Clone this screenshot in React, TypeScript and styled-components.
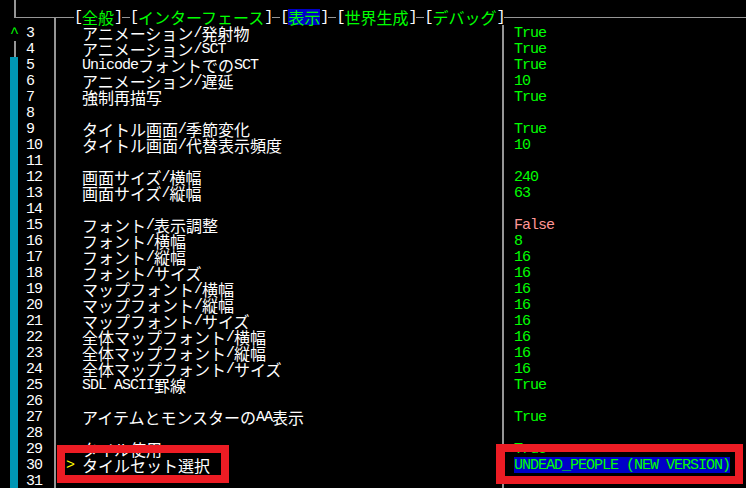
import React from 'react';
import styled, { createGlobalStyle } from 'styled-components';

const GRAY = '#969696';
const GREEN = '#00ff00';
const PINK = '#ff9696';
const TEAL = '#0096b4';
const BLUE = '#0000c8';
const YELLOW = '#ffff00';
const RED = '#ed1c24';

const rule = (x: string, y: string, w: string, h: string) =>
  `linear-gradient(${GRAY}, ${GRAY}) ${x} ${y} / ${w} ${h} no-repeat`;

const Global = createGlobalStyle`
  html, body { margin: 0; padding: 0; background: #000; }
  body { width: 746px; height: 488px; overflow: hidden; }
`;

const Screen = styled.div`
  position: relative;
  width: 746px;
  height: 488px;
  overflow: hidden;
  background: #000;
  color: #fff;
  display: flex;
  flex-direction: column;
`;

const Row = styled.div`
  display: flex;
  flex: none;
  height: 16px;
  padding-left: 10px;
`;

const TopStub = styled(Row)`
  height: 9px;
`;

const VLine = styled.div`
  flex: none;
  width: 8px;
  height: 100%;
  background: ${rule('4px', '0', '2px', '100%')};
`;

const Corner = styled.div`
  flex: none;
  width: 8px;
  height: 100%;
  background: ${rule('4px', '0', '2px', '9px')}, ${rule('4px', '8px', '4px', '1px')};
`;

const HeaderRule = styled.div`
  flex: none;
  width: 56px;
  height: 100%;
  background: ${rule('0', '8px', '100%', '1px')}, ${rule('36px', '8px', '2px', '8px')};
`;

const Dash = styled.div`
  flex: none;
  width: 8px;
  height: 100%;
  background: ${rule('0', '8px', '100%', '1px')};
`;

const Tail = styled.div`
  flex: 1;
  height: 100%;
  background: ${rule('0', '8px', '100%', '1px')};
`;

const Bracket = styled.div`
  flex: none;
  display: flex;
  color: #fff;
`;

const TabName = styled.div<{ $active?: boolean }>`
  flex: none;
  display: flex;
  color: ${GREEN};
  background: ${(p) => (p.$active ? BLUE : 'transparent')};
`;

const Run = styled.span<{ $wide: boolean }>`
  display: block;
  flex: none;
  box-sizing: border-box;
  height: 16px;
  padding-top: ${(p) => (p.$wide ? '0' : '1px')};
  white-space: pre;
  font-family: ${(p) =>
    p.$wide ? '"Noto Sans CJK JP", "Noto Sans CJK SC", sans-serif' : '"Liberation Mono", monospace'};
  font-size: ${(p) => (p.$wide ? '16px' : '15px')};
  line-height: ${(p) => (p.$wide ? '16px' : '15px')};
  letter-spacing: ${(p) => (p.$wide ? '0' : '-1px')};
`;

type ScrollState = 'up' | 'track' | 'thumb';

const ScrollCell = styled.div<{ $state: ScrollState }>`
  flex: none;
  width: 8px;
  height: 100%;
  display: flex;
  color: ${GREEN};
  background: ${(p) =>
    p.$state === 'thumb' ? TEAL : p.$state === 'track' ? rule('4px', '0', '2px', '100%') : 'transparent'};
`;

const NumCell = styled.div`
  flex: none;
  width: 24px;
  margin-left: 8px;
  display: flex;
  color: #fff;
`;

const CursorCell = styled.div`
  flex: none;
  width: 8px;
  margin-left: 8px;
  display: flex;
  color: ${YELLOW};
`;

const LabelCell = styled.div`
  flex: none;
  width: 416px;
  margin-left: 8px;
  display: flex;
  color: #fff;
`;

const ValueCell = styled.div`
  flex: 1;
  margin-left: 8px;
  display: flex;
`;

const ValueText = styled.div<{ $tone: 'green' | 'pink'; $selected?: boolean }>`
  display: flex;
  color: ${(p) => (p.$tone === 'pink' ? PINK : GREEN)};
  background: ${(p) => (p.$selected ? BLUE : 'transparent')};
`;

const Callout = styled.div`
  position: absolute;
  box-sizing: border-box;
  border: 8px solid ${RED};
  pointer-events: none;
`;

const CalloutLabel = styled(Callout)`
  left: 57px;
  top: 445px;
  width: 172px;
  height: 38px;
`;

const CalloutValue = styled(Callout)`
  left: 496px;
  top: 444px;
  width: 247px;
  height: 40px;
  border-left-width: 9px;
`;

const isWide = (ch: string) => {
  const c = ch.codePointAt(0) || 0;
  return c >= 0x2e80;
};

function Txt({ text }: { text: string }) {
  const runs: { wide: boolean; s: string }[] = [];
  for (const ch of Array.from(text)) {
    const w = isWide(ch);
    const last = runs[runs.length - 1];
    if (last && last.wide === w) last.s += ch;
    else runs.push({ wide: w, s: ch });
  }
  return (
    <>
      {runs.map((r, i) => (
        <Run key={i} $wide={r.wide}>
          {r.s}
        </Run>
      ))}
    </>
  );
}

type Item = {
  n: number;
  label?: string;
  value?: string;
  tone?: 'green' | 'pink';
  selected?: boolean;
};

const items: Item[] = [
  { n: 3, label: 'アニメーション/発射物', value: 'True' },
  { n: 4, label: 'アニメーション/SCT', value: 'True' },
  { n: 5, label: 'UnicodeフォントでのSCT', value: 'True' },
  { n: 6, label: 'アニメーション/遅延', value: '10' },
  { n: 7, label: '強制再描写', value: 'True' },
  { n: 8 },
  { n: 9, label: 'タイトル画面/季節変化', value: 'True' },
  { n: 10, label: 'タイトル画面/代替表示頻度', value: '10' },
  { n: 11 },
  { n: 12, label: '画面サイズ/横幅', value: '240' },
  { n: 13, label: '画面サイズ/縦幅', value: '63' },
  { n: 14 },
  { n: 15, label: 'フォント/表示調整', value: 'False', tone: 'pink' },
  { n: 16, label: 'フォント/横幅', value: '8' },
  { n: 17, label: 'フォント/縦幅', value: '16' },
  { n: 18, label: 'フォント/サイズ', value: '16' },
  { n: 19, label: 'マップフォント/横幅', value: '16' },
  { n: 20, label: 'マップフォント/縦幅', value: '16' },
  { n: 21, label: 'マップフォント/サイズ', value: '16' },
  { n: 22, label: '全体マップフォント/横幅', value: '16' },
  { n: 23, label: '全体マップフォント/縦幅', value: '16' },
  { n: 24, label: '全体マップフォント/サイズ', value: '16' },
  { n: 25, label: 'SDL ASCII罫線', value: 'True' },
  { n: 26 },
  { n: 27, label: 'アイテムとモンスターのAA表示', value: 'True' },
  { n: 28 },
  { n: 29, label: 'タイル使用', value: 'True' },
  { n: 30, label: 'タイルセット選択', value: 'UNDEAD_PEOPLE (NEW VERSION)', selected: true },
  { n: 31 },
];

const tabs = [
  { name: '全般' },
  { name: 'インターフェース' },
  { name: '表示', active: true },
  { name: '世界生成' },
  { name: 'デバッグ' },
];

export default function App() {
  return (
    <Screen>
      <Global />
      <TopStub>
        <VLine />
      </TopStub>
      <Row>
        <Corner />
        <HeaderRule />
        {tabs.map((t, i) => (
          <React.Fragment key={t.name}>
            {i > 0 && <Dash />}
            <Bracket>
              <Txt text="[" />
            </Bracket>
            <TabName $active={t.active}>
              <Txt text={t.name} />
            </TabName>
            <Bracket>
              <Txt text="]" />
            </Bracket>
          </React.Fragment>
        ))}
        <Tail />
      </Row>
      {items.map((it) => {
        const state: ScrollState = it.n === 3 ? 'up' : it.n === 4 ? 'track' : 'thumb';
        return (
          <Row key={it.n}>
            <ScrollCell $state={state}>{state === 'up' && <Txt text="^" />}</ScrollCell>
            <NumCell>
              <Txt text={String(it.n)} />
            </NumCell>
            <VLine />
            <CursorCell>{it.selected && <Txt text=">" />}</CursorCell>
            <LabelCell>{it.label && <Txt text={it.label} />}</LabelCell>
            <VLine />
            <ValueCell>
              {it.value && (
                <ValueText $tone={it.tone || 'green'} $selected={it.selected}>
                  <Txt text={it.value} />
                </ValueText>
              )}
            </ValueCell>
          </Row>
        );
      })}
      <CalloutLabel />
      <CalloutValue />
    </Screen>
  );
}
